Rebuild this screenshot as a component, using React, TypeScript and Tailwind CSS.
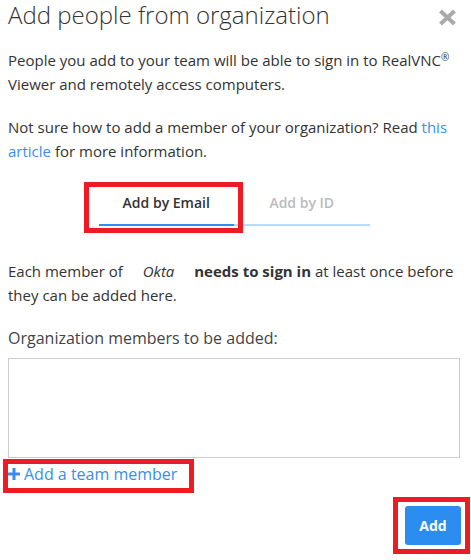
import React from "react";

export default function App() {
  return (
    <div className="w-[471px] h-[560px] bg-white font-['Open_Sans',sans-serif] text-[#333] pl-2 pr-[11px] overflow-hidden">
      <div className="flex items-start justify-between">
        <h1 className="-mt-px text-[24px] leading-[32px] font-light text-[#333]">Add people from organization</h1>
        <svg width="19" height="17" viewBox="0 0 19 17" className="mt-[9px] mr-[3px]">
          <path d="M2.5 2 L16.5 15 M16.5 2 L2.5 15" stroke="#aaaaaa" strokeWidth="4" strokeLinecap="butt" />
        </svg>
      </div>

      <p className="mt-[17px] text-[15px] leading-6">
        People you add to your team will be able to sign in to RealVNC<sup className="text-[10px]">®</sup> Viewer and remotely access computers.
      </p>

      <p className="mt-[19px] text-[15px] leading-6">
        Not sure how to add a member of your organization? Read <span className="text-[#3b8ee8]">this article</span> for more information.
      </p>

      <div className="mt-[30px] flex justify-center">
        <div className="grid grid-cols-2 w-[271px]">
          <div className="relative text-center text-[14px] leading-5 font-semibold text-[#333] pb-[11px] border-b-2 border-[#2e8ded]">
            Add by Email
            <div className="absolute -left-[15px] -right-[9px] -top-[11px] -bottom-[9px] border-[5px] border-[#ed1c24]" />
          </div>
          <div className="text-center text-[14px] leading-5 font-semibold text-[#bbbbbb] pb-[11px] border-b-2 border-[#b9dbf8]">
            Add by ID
          </div>
        </div>
      </div>

      <p className="mt-[33px] text-[15px] leading-6">
        Each member of <span className="italic px-4">Okta</span> <span className="font-bold">needs to sign in</span> at least once before they can be added here.
      </p>

      <p className="mt-[19px] text-[16px] leading-6 text-[#444]">Organization members to be added:</p>

      <div className="mt-2 h-[100px] border border-[#cccccc]" />

      <div className="mt-1">
        <span className="relative inline-flex items-center gap-1 text-[16px] leading-6 text-[#3b8ee8]">
          <svg width="12" height="12" viewBox="0 0 12 12">
            <rect x="4.5" y="0" width="3" height="12" fill="#3b8ee8" />
            <rect x="0" y="4.5" width="12" height="3" fill="#3b8ee8" />
          </svg>
          Add a team member
          <span className="absolute -left-[5px] -right-[17px] -top-[3px] -bottom-[7px] border-[5px] border-[#ed1c24]" />
        </span>
      </div>

      <div className="mt-[20px] flex justify-end">
        <div className="relative mr-[-1px]">
          <button className="w-[56px] h-[39px] rounded-[3px] bg-[#2b8def] text-white text-[14px] font-bold">Add</button>
          <div className="absolute -left-[12px] -right-[9px] -top-[9px] -bottom-[9px] border-[5px] border-[#ed1c24]" />
        </div>
      </div>
    </div>
  );
}
